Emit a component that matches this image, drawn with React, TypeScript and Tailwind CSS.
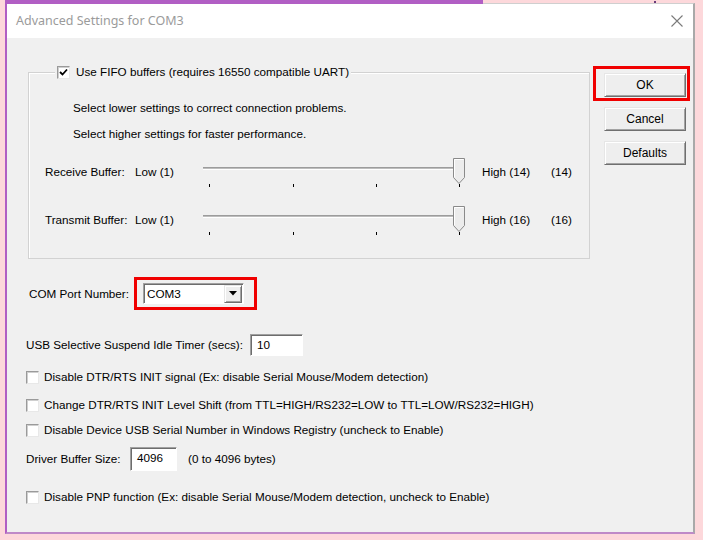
import React from "react";

const F = "font-['Liberation_Sans',Arial,sans-serif]";

function CheckBox({ checked = false }: { checked?: boolean }) {
  return (
    <span className="relative inline-flex h-[13px] w-[13px] shrink-0 items-center justify-center border border-t-[#9a9a9a] border-l-[#9a9a9a] border-r-[#e8e8e8] border-b-[#e8e8e8] bg-white shadow-[inset_1px_1px_0_#cfcfcf]">
      {checked && (
        <svg width="9" height="9" viewBox="0 0 9 9">
          <path d="M1 4 L3.5 6.5 L8 1.5" fill="none" stroke="#000" strokeWidth="1.8" />
        </svg>
      )}
    </span>
  );
}

function Slider() {
  return (
    <svg width="270" height="36" viewBox="0 0 270 36" className="shrink-0">
      <rect x="3" y="12" width="260" height="1" fill="#9c9c9c" />
      <rect x="3" y="13" width="260" height="1" fill="#bdbdbd" />
      <rect x="3" y="14" width="260" height="1" fill="#ffffff" />
      {[9, 93, 176, 259].map((x) => (
        <rect key={x} x={x} y="29" width="1" height="3" fill="#000" />
      ))}
      <path d="M253.5 3.5 H264.5 V22.5 L259 28.5 L253.5 22.5 Z" fill="#ececec" stroke="#8a8a8a" />
      <path d="M254.5 4.5 H263.5" stroke="#ffffff" />
      <path d="M254.5 4.5 V22" stroke="#ffffff" />
    </svg>
  );
}

function Btn({ children }: { children: React.ReactNode }) {
  return (
    <div className="flex h-[24px] w-[82px] items-center justify-center border border-t-[#e6e6e6] border-l-[#e6e6e6] border-r-[#6f6f6f] border-b-[#6f6f6f] bg-[#eeeeee] text-[12px] text-black shadow-[inset_1px_1px_0_#ffffff,inset_-1px_-1px_0_#a3a3a3]">
      {children}
    </div>
  );
}

function SunkenBox({ className, children }: { className: string; children: React.ReactNode }) {
  return (
    <div className={`flex items-center border border-t-[#a0a0a0] border-l-[#a0a0a0] border-r-white border-b-white bg-white shadow-[inset_1px_1px_0_#6d6d6d] ${className}`}>
      {children}
    </div>
  );
}

export default function App() {
  return (
    <div className={`relative h-[540px] w-[703px] overflow-hidden bg-[#fdd8db] ${F}`}>
      <div className="absolute left-[5px] top-0 h-[4px] w-[478px] bg-[#b15ec4]" />
      <div className="absolute left-[654px] top-[1px] h-[2px] w-[2px] bg-[#6a3a7a]" />
      <div className="ml-[5px] mt-[3px] flex h-[531px] w-[690px] flex-col border-t border-t-[#cfcfcf] border-l-2 border-l-[#b15ec4] border-b-2 border-b-[#bf8ac8] border-r-2 border-r-[#a9a9a9]">
        {/* Title bar */}
        <div className="flex h-[34px] shrink-0 items-center justify-between bg-white pl-[9px] pr-[10px]">
          <span className="font-['Noto_Sans',sans-serif] text-[12.5px] text-[#9b9b9b]">Advanced Settings for COM3</span>
          <svg width="12" height="12" viewBox="0 0 12 12">
            <path d="M0.5 0.5 L11.5 11.5 M11.5 0.5 L0.5 11.5" stroke="#7a7a7a" strokeWidth="1.1" />
          </svg>
        </div>

        {/* Body */}
        <div className="flex flex-1 flex-col bg-[#f0f0f0] pl-[19px] text-[11.7px] leading-[14px] text-black">
          <div className="flex items-start">
            {/* Group box */}
            <div className="relative ml-[2px] mt-[34px] flex h-[187px] w-[562px] flex-col border border-[#d2d2d2] shadow-[inset_1px_1px_0_#ffffff]">
              <div className="absolute left-[26px] top-[-8px] flex items-center gap-[6px] bg-[#f0f0f0] px-[2px]">
                <CheckBox checked />
                <span>Use FIFO buffers (requires 16550 compatible UART)</span>
              </div>
              <div className="mt-[28px] pl-[44px]">Select lower settings to correct connection problems.</div>
              <div className="mt-[12px] pl-[44px]">Select higher settings for faster performance.</div>
              <div className="mt-[14px] flex items-start pl-[16px]">
                <span className="mt-[10px] w-[90px]">Receive Buffer:</span>
                <span className="mt-[10px] w-[65px]">Low (1)</span>
                <Slider />
                <span className="ml-[12px] mt-[10px] w-[69px]">High (14)</span>
                <span className="mt-[10px]">(14)</span>
              </div>
              <div className="mt-[12px] flex items-start pl-[16px]">
                <span className="mt-[10px] w-[90px]">Transmit Buffer:</span>
                <span className="mt-[10px] w-[65px]">Low (1)</span>
                <Slider />
                <span className="ml-[12px] mt-[10px] w-[69px]">High (16)</span>
                <span className="mt-[10px]">(16)</span>
              </div>
            </div>

            {/* Buttons */}
            <div className="ml-[14px] mt-[35px] flex flex-col gap-[10px]">
              <div className="relative">
                <Btn>OK</Btn>
                <div className="pointer-events-none absolute bottom-[-4px] left-[-11px] right-[-4px] top-[-7px] border-[3px] border-[#f00000]" />
              </div>
              <Btn>Cancel</Btn>
              <Btn>Defaults</Btn>
            </div>
          </div>

          {/* COM port */}
          <div className="mt-[24px] flex h-[21px] items-center">
            <span className="ml-[3px] w-[114px]">COM Port Number:</span>
            <div className="relative">
              <SunkenBox className="h-[21px] w-[101px] justify-between pl-[3px] pr-[1px]">
                <span>COM3</span>
                <div className="flex h-[18px] w-[18px] items-center justify-center border border-t-[#e6e6e6] border-l-[#e6e6e6] border-r-[#6f6f6f] border-b-[#6f6f6f] bg-[#eeeeee] shadow-[inset_1px_1px_0_#ffffff,inset_-1px_-1px_0_#a3a3a3]">
                  <svg width="8" height="5" viewBox="0 0 8 5">
                    <path d="M0 0 H8 L4 4.5 Z" fill="#000" />
                  </svg>
                </div>
              </SunkenBox>
              <div className="pointer-events-none absolute bottom-[-6px] left-[-9px] right-[-13px] top-[-6px] border-[3px] border-[#f00000]" />
            </div>
          </div>

          {/* USB idle timer */}
          <div className="mt-[30px] flex h-[22px] items-center">
            <span className="w-[224px]">USB Selective Suspend Idle Timer (secs):</span>
            <SunkenBox className="h-[22px] w-[53px] pl-[6px]">
              <span>10</span>
            </SunkenBox>
          </div>

          <div className="mt-[13px] flex h-[16px] items-center gap-[5px]">
            <CheckBox />
            <span>Disable DTR/RTS INIT signal (Ex: disable Serial Mouse/Modem detection)</span>
          </div>
          <div className="mt-[12px] flex h-[16px] items-center gap-[5px]">
            <CheckBox />
            <span>Change DTR/RTS INIT Level Shift (from TTL=HIGH/RS232=LOW to TTL=LOW/RS232=HIGH)</span>
          </div>
          <div className="mt-[9px] flex h-[16px] items-center gap-[5px]">
            <CheckBox />
            <span>Disable Device USB Serial Number in Windows Registry (uncheck to Enable)</span>
          </div>

          <div className="mt-[9px] flex h-[24px] items-center">
            <span className="w-[104px]">Driver Buffer Size:</span>
            <SunkenBox className="h-[24px] w-[47px] items-start pl-[6px] pt-[3px]">
              <span>4096</span>
            </SunkenBox>
            <span className="ml-[11px]">(0 to 4096 bytes)</span>
          </div>

          <div className="mt-[18px] flex h-[16px] items-center gap-[5px]">
            <CheckBox />
            <span>Disable PNP function (Ex: disable Serial Mouse/Modem detection, uncheck to Enable)</span>
          </div>
        </div>
      </div>
    </div>
  );
}
